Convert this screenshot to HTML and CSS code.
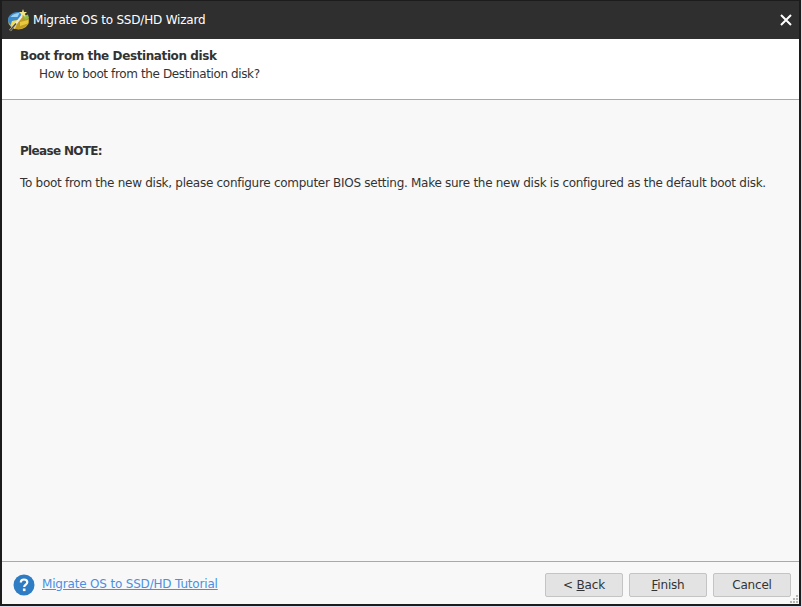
FILE: index.html
```html
<!DOCTYPE html>
<html lang="en">
<head>
<meta charset="utf-8">
<title>Migrate OS to SSD/HD Wizard</title>
<link rel="stylesheet" href="styles.css">
</head>
<body>
<div class="window">
  <header class="titlebar">
    <svg class="app-icon" width="24" height="24" viewBox="0 0 24 24">
      <ellipse cx="11.500" cy="13" rx="10.500" ry="8.500" fill="#d9b92f"/>
      <path d="M1 12 C1 7 6 4 11 4 C13 4 14.500 4.500 16 5.500 L12 12 L5 13 L4 17 C2 15.500 1 14 1 12 Z" fill="#3a8ad2"/>
      <path d="M3.500 9 C6 6 9 5 12.500 5 L10.500 9 Z" fill="#9ad2ef"/>
      <path d="M4 17 L5 13 L12 12 L10 16 L8 21 C6 20.300 4.800 19 4 17 Z" fill="#efdc58"/>
      <path d="M12 12 L16 6.500 C20 8 22 10.500 22 13 C22 17.500 16 20.500 11 21 L8 21 Z" fill="#bf9a25"/>
      <path d="M13 14 L21 12 L21 15.500 L13 18 Z" fill="#e6c93c"/>
      <path d="M16 8 L21 6.500 L22 10 L18 11.500 Z" fill="#8fbf4a"/>
      <path d="M16 1 L17 4 L20 4 L17.800 6 L18.500 9 L16 7.300 L13.500 9 L14.200 6 L12 4 L15 4 Z" fill="#f3e48a"/>
      <path d="M15 8 L3 22.500" stroke="#ece9dc" stroke-width="2"/>
      <path d="M9 15.500 L3 22.500" stroke="#4f4a40" stroke-width="1.500"/>
    </svg>
    <span class="title">Migrate OS to SSD/HD Wizard</span>
    <svg class="close" width="12" height="12" viewBox="0 0 12 12">
      <path d="M1 1 L11 11 M11 1 L1 11" stroke="#fff" stroke-width="2"/>
    </svg>
  </header>
  <section class="head">
    <h1>Boot from the Destination disk</h1>
    <p>How to boot from the Destination disk?</p>
  </section>
  <main class="content">
    <h2>Please NOTE:</h2>
    <p>To boot from the new disk, please configure computer BIOS setting. Make sure the new disk is configured as the default boot disk.</p>
  </main>
  <footer class="footer">
    <svg class="help" width="22" height="22" viewBox="0 0 22 22">
      <circle cx="11" cy="11" r="10.500" fill="#2d7cc4"/>
      <path d="M7.800 8.500 C7.800 6.500 9.300 5.500 11 5.500 C12.900 5.500 14.300 6.600 14.300 8.300 C14.300 10.500 11.200 10.700 11.200 13" fill="none" stroke="#fff" stroke-width="2.200"/>
      <rect x="9.900" y="14.500" width="2.600" height="2.600" fill="#fff"/>
    </svg>
    <a class="tutorial" href="#">Migrate OS to SSD/HD Tutorial</a>
    <div class="buttons">
      <button class="btn">&lt; <u>B</u>ack</button>
      <button class="btn"><u>F</u>inish</button>
      <button class="btn">Cancel</button>
    </div>
    <svg class="grip" width="10" height="10" viewBox="0 0 10 10">
      <path d="M7 1h2v2H7zM4 4h2v2H4zM7 4h2v2H7zM1 7h2v2H1zM4 7h2v2H4zM7 7h2v2H7z" fill="#b5b5b5"/>
    </svg>
  </footer>
</div>
</body>
</html>
```
FILE: styles.css
```css
* { box-sizing: border-box; }
html, body { margin: 0; height: 100%; background: #d9d9ee; }
body { font-family: "DejaVu Sans", sans-serif; font-size: 12px; color: #333; }
.window {
  width: 801px;
  height: 606px;
  display: flex;
  flex-direction: column;
  border: 2px solid #1c1c1c;
  border-top-width: 1px;
  background: #f8f8f8;
  position: relative;
}
.titlebar {
  height: 38px;
  flex: none;
  background: #2f2f2f;
  display: flex;
  align-items: center;
  padding: 0 7px 0 5px;
  color: #fff;
}
.app-icon { flex: none; }
.title { margin-left: 2px; letter-spacing: -0.2px; }
.close { margin-left: auto; }
.head {
  flex: none;
  height: 61px;
  background: #fff;
  border-bottom: 1px solid #a9a9a9;
  padding: 10px 18px 0;
}
.head h1 { margin: 0; font-size: 12px; line-height: 15px; font-weight: bold; letter-spacing: -0.4px; }
.head p { margin: 3px 0 0 19px; line-height: 15px; letter-spacing: -0.38px; }
.content { flex: 1; padding: 44px 18px 0; }
.content h2 { margin: 0; font-size: 12px; line-height: 15px; font-weight: bold; letter-spacing: -0.67px; }
.content p { margin: 17px 0 0; line-height: 15px; letter-spacing: -0.28px; white-space: nowrap; }
.footer {
  flex: none;
  height: 43px;
  border-top: 1px solid #a9a9a9;
  display: flex;
  align-items: center;
  padding: 3px 8px 0 11px;
  position: relative;
}
.tutorial { margin: 0 0 2px 7px; color: #4a90e2; letter-spacing: -0.18px; }
.buttons { margin-left: auto; display: flex; gap: 6px; }
.btn {
  width: 78px;
  height: 24px;
  border: 1px solid #c4c4c4;
  border-radius: 2px;
  background: #e3e3e3;
  color: #333;
  font: inherit;
  letter-spacing: -0.2px;
  padding: 0;
}
.grip { position: absolute; right: 0; bottom: 0; }
```
